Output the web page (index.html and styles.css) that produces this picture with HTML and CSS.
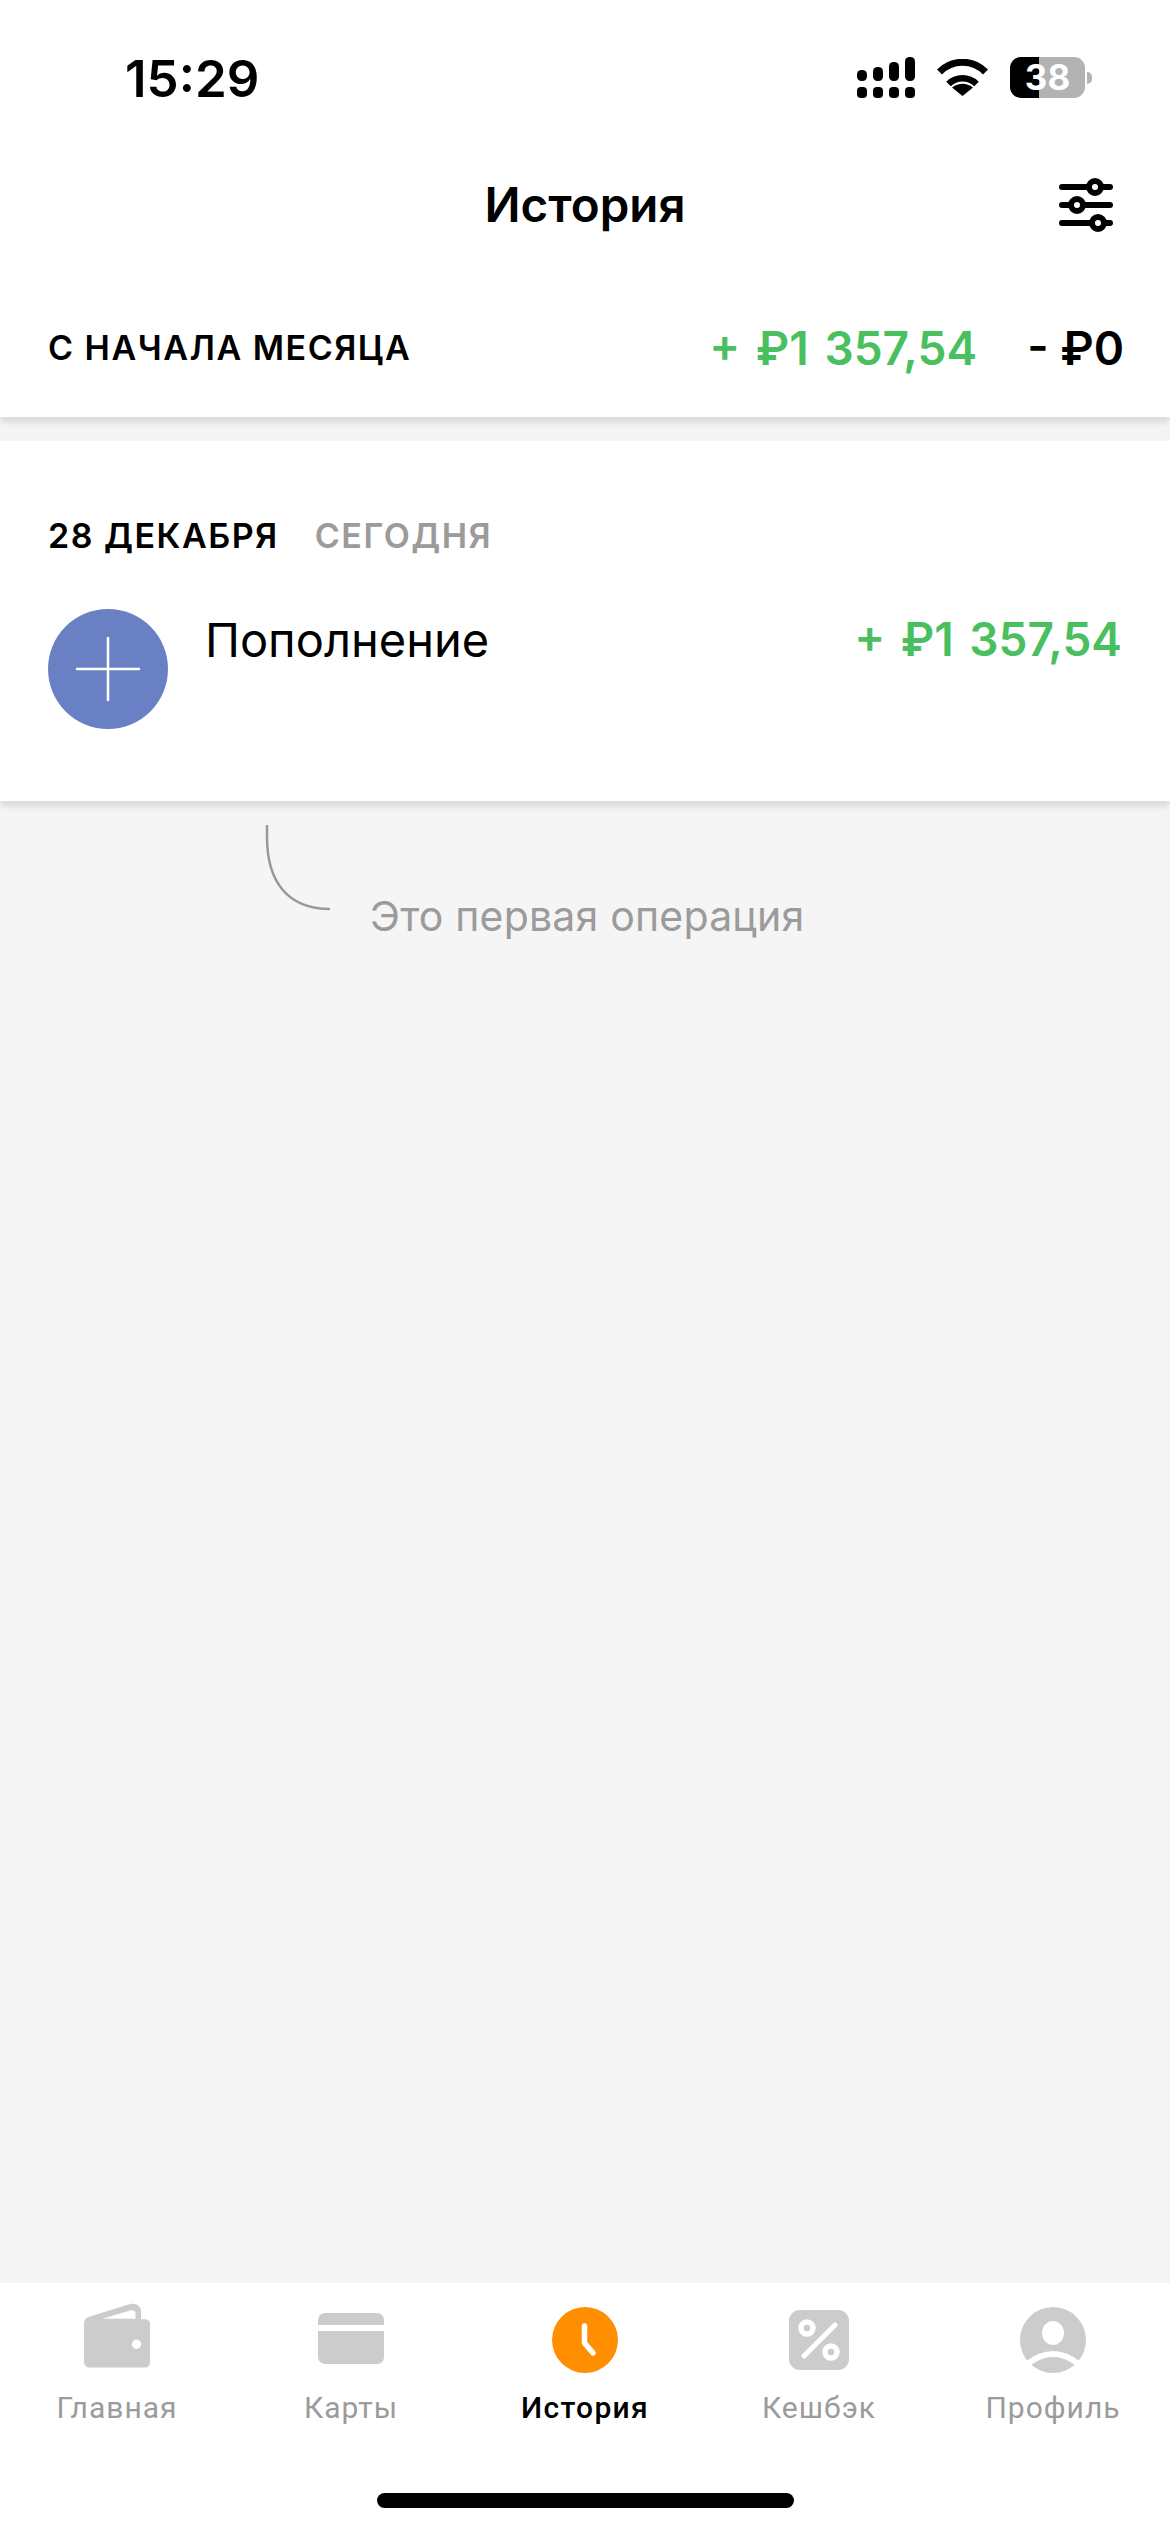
FILE: index.html
```html
<!DOCTYPE html>
<html lang="ru">
<head>
<meta charset="utf-8">
<title>История</title>
<link rel="stylesheet" href="styles.css">
</head>
<body>
<div class="app">
  <header class="top">
    <div class="status">
      <span class="time">15:29</span>
      <div class="status-icons">
        <svg class="signal" width="58" height="41" viewBox="0 0 58 41">
          <rect x="0" y="13" width="10" height="11" rx="4.5"/><rect x="16" y="10" width="10" height="14" rx="4.5"/><rect x="32" y="5" width="10" height="19" rx="4.5"/><rect x="48" y="0" width="10" height="24" rx="4.5"/>
          <rect x="0" y="30" width="10" height="11" rx="4"/><rect x="16" y="30" width="10" height="11" rx="4"/><rect x="32" y="30" width="10" height="11" rx="4"/><rect x="48" y="30" width="10" height="11" rx="4"/>
        </svg>
        <svg class="wifi" width="51" height="37" viewBox="0 0 51 37">
          <path d="M2.5 13A32 32 0 0 1 48.5 13" fill="none" stroke="#000" stroke-width="7"/>
          <path d="M11.5 25A20 20 0 0 1 39.5 25" fill="none" stroke="#000" stroke-width="6.5"/>
          <path d="M25.5 37L15 28.5Q25.5 21 36 28.5Z"/>
        </svg>
        <div class="battery"><span class="battery-level">38</span><span class="battery-cap"></span></div>
      </div>
    </div>
    <div class="nav">
      <h1 class="title">История</h1>
      <svg class="filter" width="54" height="54" viewBox="0 0 54 54">
        <g stroke="#000" stroke-width="6" stroke-linecap="round"><path d="M3 9H51M3 27H51M3 45H51"/></g>
        <g fill="#fff" stroke="#000" stroke-width="6"><circle cx="36" cy="9" r="6"/><circle cx="18" cy="27" r="6"/><circle cx="39" cy="45" r="6"/></g>
      </svg>
    </div>
    <div class="summary">
      <span class="caps">С НАЧАЛА МЕСЯЦА</span>
      <div class="totals">
        <span class="amount green">+ ₽1 357,54</span>
        <span class="amount">- ₽0</span>
      </div>
    </div>
  </header>

  <section class="card">
    <div class="date-row">
      <span class="caps">28 ДЕКАБРЯ</span>
      <span class="caps muted">СЕГОДНЯ</span>
    </div>
    <div class="op">
      <svg class="op-icon" width="120" height="120" viewBox="0 0 120 120">
        <circle cx="60" cy="60" r="60" fill="#6a80c4"/>
        <path d="M60 29V91M29 60H91" stroke="#fff" stroke-width="2.5" stroke-linecap="round"/>
      </svg>
      <span class="op-name">Пополнение</span>
      <span class="amount green">+ ₽1 357,54</span>
    </div>
  </section>

  <div class="hint">
    <svg class="hint-line" width="66" height="86" viewBox="0 0 66 86">
      <path d="M2 0V12C2 56 22 84 65 84" fill="none" stroke="#999" stroke-width="2.5"/>
    </svg>
    <span class="hint-text">Это первая операция</span>
  </div>

  <nav class="tabs">
    <div class="tab">
      <div class="tab-icon">
        <svg class="icon-wallet" width="66" height="65" viewBox="0 0 66 65">
          <path fill="#ccc" d="M5 13.7L46 1C52 -.5 57 3 57 8V16.3H61C64 16.3 66 18 66 21V59C66 62.500 64 64.500 61 64.500H6C2.500 64.500 0 62.500 0 59V20C0 17 2 14.700 5 13.700Z"/>
          <path fill="#fff" d="M18.200 15.700L48 7L51.500 8.700V15.700Z"/>
          <circle cx="52.600" cy="41.300" r="4.700" fill="#fff"/>
        </svg>
      </div>
      <span class="tab-label">Главная</span>
    </div>
    <div class="tab">
      <div class="tab-icon">
        <svg class="icon-card" width="66" height="51" viewBox="0 0 66 51">
          <rect width="66" height="51" rx="7" fill="#ccc"/>
          <rect y="12" width="66" height="6" fill="#fff"/>
        </svg>
      </div>
      <span class="tab-label">Карты</span>
    </div>
    <div class="tab active">
      <div class="tab-icon">
        <svg width="66" height="66" viewBox="0 0 66 66">
          <circle cx="33" cy="33" r="33" fill="#ff8f00"/>
          <path d="M32.500 19V36L41 46" fill="none" stroke="#fff" stroke-width="5.500" stroke-linecap="round" stroke-linejoin="round"/>
        </svg>
      </div>
      <span class="tab-label">История</span>
    </div>
    <div class="tab">
      <div class="tab-icon">
        <svg width="60" height="60" viewBox="0 0 60 60">
          <rect width="60" height="60" rx="11" fill="#ccc"/>
          <path d="M15 46L46 15" stroke="#fff" stroke-width="5" stroke-linecap="round"/>
          <circle cx="18" cy="18" r="6" fill="none" stroke="#fff" stroke-width="5.500"/>
          <circle cx="42" cy="42" r="6" fill="none" stroke="#fff" stroke-width="5.500"/>
        </svg>
      </div>
      <span class="tab-label">Кешбэк</span>
    </div>
    <div class="tab">
      <div class="tab-icon">
        <svg width="66" height="66" viewBox="0 0 66 66">
          <circle cx="33" cy="33" r="33" fill="#ccc"/>
          <ellipse cx="33" cy="26" rx="11" ry="12" fill="#fff"/>
          <path d="M7.500 57Q33 37 58.500 57" fill="none" stroke="#fff" stroke-width="6"/>
        </svg>
      </div>
      <span class="tab-label">Профиль</span>
    </div>
  </nav>
  <div class="home-area"><div class="home-bar"></div></div>
</div>
</body>
</html>
```
FILE: styles.css
```css
* { box-sizing: border-box; }
html, body { margin: 0; padding: 0; }
body { font-family: Inter, Roboto, sans-serif; background: #f5f5f5; color: #000; }
.app { width: 1170px; height: 2532px; display: flex; flex-direction: column; overflow: hidden; }

.top { background: #fff; height: 417px; box-shadow: 0 6px 7px -1px rgba(0,0,0,.12); position: relative; z-index: 1; }
.status { height: 150px; display: flex; justify-content: space-between; align-items: flex-start; padding: 49px 85px 0 125px; }
.time { font-weight: 600; font-size: 51px; line-height: 60px; }
.status-icons { display: flex; align-items: flex-start; margin-top: 8px; }
.signal { margin-right: 22px; }
.wifi { margin-top: 2px; margin-right: 22px; }
.battery { width: 75px; height: 41px; border-radius: 11px; background: linear-gradient(to right, #000 29px, #b3b3b3 29px); position: relative; color: #fff; font-weight: 700; font-size: 35px; line-height: 41px; text-align: center; }
.battery-cap { position: absolute; left: 77px; top: 15px; width: 5px; height: 12px; border-radius: 0 6px 6px 0; background: #b3b3b3; }

.nav { height: 110px; display: flex; align-items: center; justify-content: center; position: relative; }
.title { margin: 0; font-size: 47.500px; font-weight: 600; line-height: 110px; }
.filter { position: absolute; right: 57px; top: 28px; }

.summary { display: flex; justify-content: space-between; align-items: center; padding: 61px 46px 0 48px; }
.caps { font-size: 34px; font-weight: 600; letter-spacing: 1.500px; line-height: 44px; }
.muted { color: #9b9b9b; }
.totals { display: flex; gap: 50px; }
.amount { font-size: 46px; font-weight: 600; line-height: 54px; }
.green { color: #4abf60; word-spacing: 4px; }

.card { background: #fff; height: 360px; margin-top: 24px; padding: 73px 48px 0 48px; box-shadow: 0 6px 7px -1px rgba(0,0,0,.12); position: relative; }
.date-row { display: flex; gap: 36px; }
.op { display: flex; align-items: flex-start; margin-top: 51px; }
.op-icon { flex: none; }
.op-name { flex: 1; margin-left: 37px; font-size: 47px; line-height: 56px; margin-top: 3px; }
.op .amount { margin-top: 3px; }

.hint { display: flex; align-items: flex-start; padding: 24px 0 0 265px; flex: 1; align-self: stretch; }
.hint-line { flex: none; }
.hint-text { margin: 66px 0 0 39px; font-size: 41px; letter-spacing: .2px; line-height: 50px; color: #9b9b9b; }

.tabs { background: #fff; height: 143px; display: grid; grid-template-columns: repeat(5, 1fr); flex: none; font-family: Roboto, sans-serif; }
.tab { display: flex; flex-direction: column; align-items: center; }
.tab-icon { height: 107px; display: flex; align-items: center; justify-content: center; padding-top: 7px; }
.icon-wallet { margin-bottom: 10px; }
.icon-card { margin-bottom: 3px; }
.tab-label { font-size: 30px; line-height: 36px; color: #9b9b9b; letter-spacing: 1px; }
.active .tab-label { color: #000; font-weight: 500; letter-spacing: 1.300px; }
.home-area { background: #fff; height: 106px; flex: none; display: flex; justify-content: center; padding-top: 67px; }
.home-bar { width: 417px; height: 15px; border-radius: 8px; background: #000; }
```
